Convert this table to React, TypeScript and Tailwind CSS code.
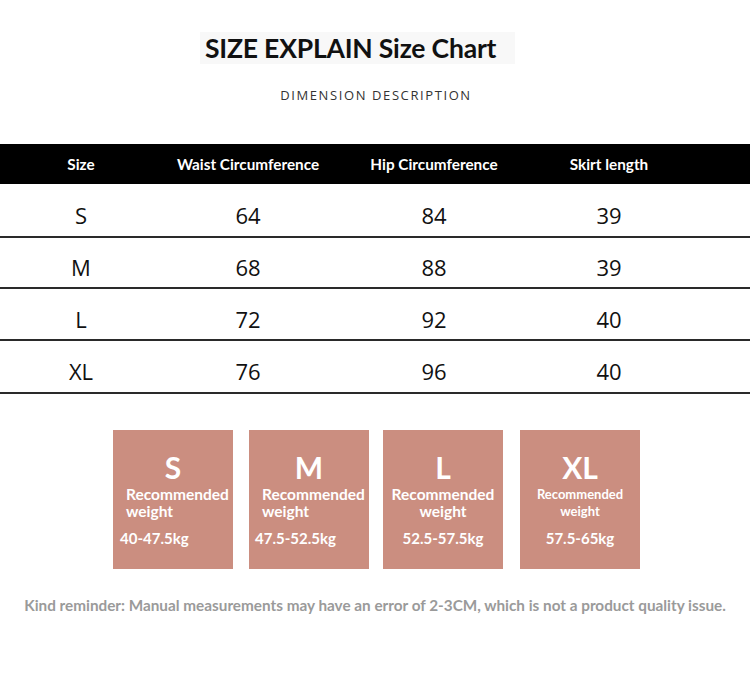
const rows = [
  { size: 'S', waist: '64', hip: '84', skirt: '39', h: 'h-[54px]' },
  { size: 'M', waist: '68', hip: '88', skirt: '39', h: 'h-[51px]' },
  { size: 'L', waist: '72', hip: '92', skirt: '40', h: 'h-[52px]' },
  { size: 'XL', waist: '76', hip: '96', skirt: '40', h: 'h-[53px]' },
];

const cards = [
  { size: 'S', range: '40-47.5kg', align: 'left', rangePad: 'pl-[7px]', small: false, ml: '' },
  { size: 'M', range: '47.5-52.5kg', align: 'left', rangePad: 'pl-[6px]', small: false, ml: 'ml-[16px]' },
  { size: 'L', range: '52.5-57.5kg', align: 'center', rangePad: '', small: false, ml: 'ml-[14px]' },
  { size: 'XL', range: '57.5-65kg', align: 'center', rangePad: '', small: true, ml: 'ml-[17px]' },
];

const grid = 'grid grid-cols-[162px_172px_200px_150px_1fr] items-center text-center';

export default function App() {
  return (
    <div className="w-[750px] h-[698px] bg-white font-['Lato',sans-serif] overflow-hidden">
      {/* Title */}
      <div className="pt-[32px] pl-[200px]">
        <div className="w-[315px] h-[32px] bg-[#f8f8f8] flex items-center pl-[5px]">
          <h1 className="text-[26.5px] font-bold text-[#111] leading-none tracking-[-0.2px]">SIZE EXPLAIN Size Chart</h1>
        </div>
      </div>
      <p className="mt-[25px] text-center pl-[2px] text-[13px] tracking-[1.6px] text-[#333] font-['Open_Sans',sans-serif] leading-none">
        DIMENSION DESCRIPTION
      </p>

      {/* Table */}
      <div className="mt-[42px]">
        <div className={`${grid} h-[40px] bg-black text-white text-[15.3px] font-bold`}>
          <span>Size</span>
          <span>Waist Circumference</span>
          <span>Hip Circumference</span>
          <span>Skirt length</span>
          <span />
        </div>
        {rows.map((r) => (
          <div
            key={r.size}
            className={`${grid} ${r.h} border-b-2 border-[#2a2a2a] text-[22px] text-[#111] font-['Open_Sans',sans-serif] pt-[10px]`}
          >
            <span>{r.size}</span>
            <span>{r.waist}</span>
            <span>{r.hip}</span>
            <span>{r.skirt}</span>
            <span />
          </div>
        ))}
      </div>

      {/* Recommended weight cards */}
      <div className="mt-[36px] flex pl-[113px]">
        {cards.map((c) => (
          <div key={c.size} className={`${c.ml} w-[120px] h-[139px] bg-[#cb8e80] text-white font-bold flex flex-col`}>
            <div className="text-center text-[30px] h-[24px] leading-[24px] mt-[25px]">{c.size}</div>
            <div
              className={`mt-[7px] leading-[17px] ${
                c.align === 'left' ? 'text-left pl-[13px]' : 'text-center'
              } ${c.small ? 'text-[13px]' : 'text-[15.5px]'}`}
            >
              Recommended
              <br />
              weight
            </div>
            <div className={`mt-[11px] text-[15px] leading-none ${c.align === 'left' ? `text-left ${c.rangePad}` : 'text-center'}`}>
              {c.range}
            </div>
          </div>
        ))}
      </div>

      <p className="mt-[25px] text-center text-[15.3px] font-bold text-[#9a9a9a]">
        Kind reminder: Manual measurements may have an error of 2-3CM, which is not a product quality issue.
      </p>
    </div>
  );
}
